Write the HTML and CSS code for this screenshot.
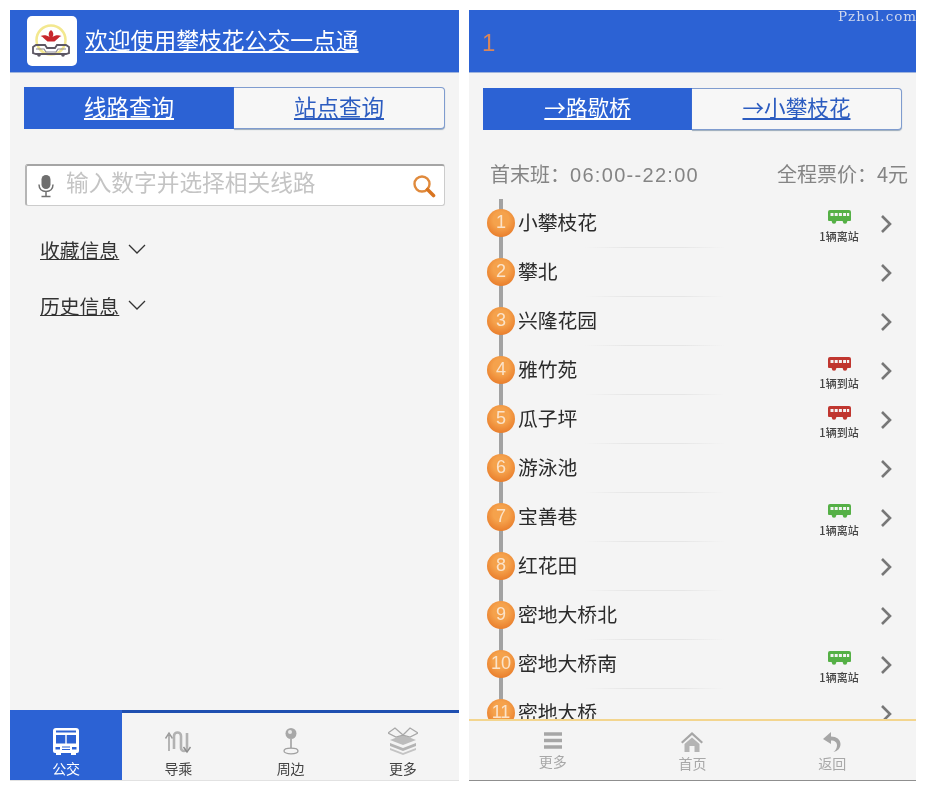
FILE: index.html
```html
<!DOCTYPE html>
<html lang="zh-CN">
<head>
    <meta charset="UTF-8">
    <meta name="viewport" content="width=device-width, initial-scale=1.0">
    <title>攀枝花公交一点通</title>
    <link rel="stylesheet" href="styles.css">
</head>
<body>
    <svg class="icon-defs" width="0" height="0">
        <symbol id="bus-side" viewBox="0 0 23 14">
            <path d="M2 0h19a2 2 0 0 1 2 2v8a1 1 0 0 1-1 1H1a1 1 0 0 1-1-1V2a2 2 0 0 1 2-2z" fill="currentColor"/>
            <path d="M2.500 3h3v3h-3zM6.700 3h3v3h-3zM10.900 3h3v3h-3zM15.100 3h3v3h-3zM19 3h2.200v3H19z" fill="#f4f4f4"/>
            <circle cx="6" cy="11.500" r="2.200" fill="currentColor"/>
            <circle cx="17" cy="11.500" r="2.200" fill="currentColor"/>
        </symbol>
        <symbol id="chevron" viewBox="0 0 12 20">
            <path d="M2 2l8 8-8 8" fill="none" stroke="currentColor" stroke-width="2.600"/>
        </symbol>
    </svg>

    <section class="screen">
        <header class="top-bar">
            <div class="logo">
                <svg width="44" height="38" viewBox="0 0 44 38">
                    <circle cx="21" cy="18" r="14.500" fill="#fff" stroke="#f3e88f" stroke-width="2.500"/>
                    <path d="M21 8c2.500 2 3 4.500 1.500 7 2.500-2 6-2.500 9-1-2.500.5-4 3.500-7 5.500h-7c-3-2-4.500-5-7-5.500 3-1.500 6.500-1 9 1-1.500-2.500-1-5 1.500-7z" fill="#c8262c"/>
                    <path d="M3 31v-6l3-2h9l2 3h8l2-3h9l3 2v6l-3 1H6z" fill="none" stroke="#5d5864" stroke-width="1.800"/>
                    <path d="M6 27h8l2 3h10l2-3h8" fill="none" stroke="#8a8590" stroke-width="1.200"/>
                    <circle cx="9" cy="33" r="1.800" fill="#5d5864"/>
                    <circle cx="33" cy="33" r="1.800" fill="#5d5864"/>
                </svg>
            </div>
            <a class="app-title" href="#">欢迎使用攀枝花公交一点通</a>
        </header>

        <div class="tabs tabs-main">
            <a class="tab active" href="#">线路查询</a>
            <a class="tab" href="#">站点查询</a>
        </div>

        <div class="search-box">
            <svg class="mic" width="16" height="24" viewBox="0 0 16 24">
                <rect x="3.500" y="1" width="9" height="14" rx="4.500" fill="#6f6f6f"/>
                <path d="M1 10.500c0 4.500 3 7 7 7s7-2.500 7-7M8 17.500V22M3.500 22.500h9" fill="none" stroke="#6f6f6f" stroke-width="1.500"/>
            </svg>
            <span class="placeholder">输入数字并选择相关线路</span>
            <svg class="magnifier" width="24" height="24" viewBox="0 0 24 24">
                <circle cx="10" cy="10" r="7.500" fill="none" stroke="#e08a3c" stroke-width="2.400"/>
                <path d="M15.500 15.500l6 6" stroke="#d9741f" stroke-width="3.600" stroke-linecap="round"/>
            </svg>
        </div>

        <div class="fold-list">
            <a class="fold" href="#"><span>收藏信息</span><svg width="18" height="12" viewBox="0 0 18 12"><path d="M1 2l8 8 8-8" fill="none" stroke="#333" stroke-width="1.300"/></svg></a>
            <a class="fold" href="#"><span>历史信息</span><svg width="18" height="12" viewBox="0 0 18 12"><path d="M1 2l8 8 8-8" fill="none" stroke="#333" stroke-width="1.300"/></svg></a>
        </div>

        <nav class="main-nav">
            <a class="nav-item active" href="#">
                <svg width="28" height="28" viewBox="0 0 28 28">
                    <path d="M4 1h20a3 3 0 0 1 3 3v20a2 2 0 0 1-2 2H3a2 2 0 0 1-2-2V4a3 3 0 0 1 3-3z" fill="#fff"/>
                    <path d="M4 3.500h20v2H4zM4 8h9.300v8.500H4zM14.700 8H24v8.500h-9.300z" fill="#2c62d4"/>
                    <path d="M3.500 20h4.500v2.500H3.500zM20 20h4.500v2.500H20zM10 19.500h8v1h-8zM10 22h8v1h-8z" fill="#2c62d4"/>
                    <path d="M4 25h5v3H4zM19 25h5v3h-5z" fill="#fff"/>
                </svg>
                <span>公交</span>
            </a>
            <a class="nav-item" href="#">
                <svg width="28" height="28" viewBox="0 0 28 28">
                    <path d="M5 24V8M1.500 11.500L5 6l3.500 5.500" fill="none" stroke="#9a9a9a" stroke-width="1.400"/>
                    <path d="M10 22V9a3.500 3.500 0 0 1 7 0v12a3 3 0 0 0 6 0V6" fill="none" stroke="#b2b2b2" stroke-width="2.600"/>
                    <path d="M19.500 20l3.500 5 3.500-5" fill="none" stroke="#8c8c8c" stroke-width="1.400"/>
                </svg>
                <span>导乘</span>
            </a>
            <a class="nav-item" href="#">
                <svg width="20" height="28" viewBox="0 0 20 28">
                    <circle cx="10" cy="6.500" r="5.500" fill="#a8a8a8"/>
                    <circle cx="9" cy="5" r="2" fill="#e8e8e8"/>
                    <path d="M10 12v11" stroke="#a0a0a0" stroke-width="1.600"/>
                    <ellipse cx="10" cy="24" rx="7" ry="2.800" fill="#f4f4f4" stroke="#a0a0a0" stroke-width="1.300"/>
                </svg>
                <span>周边</span>
            </a>
            <a class="nav-item" href="#">
                <svg width="30" height="28" viewBox="0 0 30 28">
                    <path d="M15 8L2 13l13 5 13-5z" fill="#bcbcbc"/>
                    <path d="M2 16l13 5 13-5v3l-13 5-13-5z" fill="#b4b4b4"/>
                    <path d="M2 21l13 5 13-5v2l-13 5-13-5z" fill="#c4c4c4"/>
                    <path d="M15 8L7 1 0 6l8 4zM15 8l7-7 8 5-8 4z" fill="#f4f4f4" stroke="#a8a8a8" stroke-width="1.300"/>
                </svg>
                <span>更多</span>
            </a>
        </nav>
    </section>

    <section class="screen">
        <header class="top-bar">
            <span class="line-no">1</span>
        </header>
        <span class="watermark">Pzhol.com</span>

        <div class="tabs tabs-line">
            <a class="tab active" href="#">→路歇桥</a>
            <a class="tab" href="#">→小攀枝花</a>
        </div>

        <div class="line-info">
            <span>首末班：<span class="time">06:00--22:00</span></span>
            <span>全程票价：4元</span>
        </div>

        <ul class="stops">
            <li class="stop"><b class="num">1</b><span class="name">小攀枝花</span><span class="bus leaving"><svg width="23" height="14"><use href="#bus-side"/></svg><small>1辆离站</small></span><svg class="more" width="12" height="20"><use href="#chevron"/></svg></li>
            <li class="stop"><b class="num">2</b><span class="name">攀北</span><span class="bus"></span><svg class="more" width="12" height="20"><use href="#chevron"/></svg></li>
            <li class="stop"><b class="num">3</b><span class="name">兴隆花园</span><span class="bus"></span><svg class="more" width="12" height="20"><use href="#chevron"/></svg></li>
            <li class="stop"><b class="num">4</b><span class="name">雅竹苑</span><span class="bus arrived"><svg width="23" height="14"><use href="#bus-side"/></svg><small>1辆到站</small></span><svg class="more" width="12" height="20"><use href="#chevron"/></svg></li>
            <li class="stop"><b class="num">5</b><span class="name">瓜子坪</span><span class="bus arrived"><svg width="23" height="14"><use href="#bus-side"/></svg><small>1辆到站</small></span><svg class="more" width="12" height="20"><use href="#chevron"/></svg></li>
            <li class="stop"><b class="num">6</b><span class="name">游泳池</span><span class="bus"></span><svg class="more" width="12" height="20"><use href="#chevron"/></svg></li>
            <li class="stop"><b class="num">7</b><span class="name">宝善巷</span><span class="bus leaving"><svg width="23" height="14"><use href="#bus-side"/></svg><small>1辆离站</small></span><svg class="more" width="12" height="20"><use href="#chevron"/></svg></li>
            <li class="stop"><b class="num">8</b><span class="name">红花田</span><span class="bus"></span><svg class="more" width="12" height="20"><use href="#chevron"/></svg></li>
            <li class="stop"><b class="num">9</b><span class="name">密地大桥北</span><span class="bus"></span><svg class="more" width="12" height="20"><use href="#chevron"/></svg></li>
            <li class="stop"><b class="num">10</b><span class="name">密地大桥南</span><span class="bus leaving"><svg width="23" height="14"><use href="#bus-side"/></svg><small>1辆离站</small></span><svg class="more" width="12" height="20"><use href="#chevron"/></svg></li>
            <li class="stop"><b class="num">11</b><span class="name">密地大桥</span><span class="bus"></span><svg class="more" width="12" height="20"><use href="#chevron"/></svg></li>
        </ul>

        <footer class="line-nav">
            <a class="line-nav-item" href="#">
                <svg width="22" height="20" viewBox="0 0 22 20"><path d="M2 3h18M2 9.500h18M2 16h18" stroke="#a6a6a6" stroke-width="3.400"/></svg>
                <span>更多</span>
            </a>
            <a class="line-nav-item" href="#">
                <svg width="24" height="22" viewBox="0 0 24 22"><path d="M12 1L1 11l1.500 1.500L12 4l9.500 8.500L23 11z" fill="#a6a6a6"/><path d="M4.500 13L12 6.500l7.500 6.500v8h-5v-6h-5v6h-5z" fill="#b4b4b4"/></svg>
                <span>首页</span>
            </a>
            <a class="line-nav-item" href="#">
                <svg width="20" height="22" viewBox="0 0 20 22"><path d="M9 1L1 8l8 5V9.500c4 0 6 2 6 5 0 2.500-1.500 5-3.500 6.500 4.500-1 7-4 7-8 0-4.500-4-7.500-9.500-7.500z" fill="#a6a6a6"/></svg>
                <span>返回</span>
            </a>
        </footer>
    </section>
</body>
</html>
```

FILE: styles.css
```css
* {
    box-sizing: border-box;
}
html, body {
    margin: 0;
    padding: 0;
}
body {
    display: flex;
    gap: 10px;
    width: 926px;
    height: 791px;
    padding: 10px;
    overflow: hidden;
    background-color: #fff;
    font-family: "Noto Sans CJK SC", "Liberation Sans", sans-serif;
    color: #333;
}
a {
    color: inherit;
}
.icon-defs {
    position: absolute;
}
.screen {
    position: relative;
    display: flex;
    flex-direction: column;
    height: 771px;
    background-color: #f4f4f4;
    overflow: hidden;
    filter: blur(0.4px);
}
.screen:first-of-type {
    width: 449px;
}
.screen:last-of-type {
    width: 447px;
    flex: none;
    border-bottom: 1px solid #8f8f8f;
}
.top-bar {
    display: flex;
    align-items: center;
    flex: none;
    height: 63px;
    padding-left: 17px;
    background-color: #2c62d4;
    color: #fff;
    border-bottom: 1px solid #9fb4dd;
}
.logo {
    display: flex;
    align-items: center;
    justify-content: center;
    flex: none;
    width: 50px;
    height: 50px;
    background-color: #fff;
    border-radius: 5px;
}
.app-title {
    margin-left: 8px;
    padding-bottom: 2px;
    font-size: 22.800px;
    line-height: 30px;
}
.line-no {
    margin-left: -4px;
    margin-top: 4px;
    font-family: "Liberation Sans", sans-serif;
    font-size: 24px;
    color: #d9865a;
}
.watermark {
    position: absolute;
    top: -2px;
    left: 369px;
    font-family: "DejaVu Serif", serif;
    font-size: 13.500px;
    letter-spacing: 1px;
    white-space: nowrap;
    color: #cfd8ee;
}
.tabs {
    display: flex;
    flex: none;
    height: 42px;
    font-size: 22.500px;
}
.tabs-main {
    margin: 14px 14px 0;
}
.tabs-line {
    margin: 15px 14px 0;
    font-size: 21.600px;
}
.tab {
    flex: 1;
    display: flex;
    align-items: center;
    justify-content: center;
    padding-bottom: 5px;
    color: #2c5cc0;
    background-color: #f7f7f7;
    border: 1px solid #7f9ccf;
    border-left: none;
    border-radius: 0 4px 4px 0;
    box-shadow: 0 1px 1px #9ab;
}
.tab.active {
    color: #fff;
    background-color: #2c62d4;
    border: none;
    border-radius: 0;
    box-shadow: none;
}
.search-box {
    display: flex;
    align-items: center;
    flex: none;
    height: 42px;
    margin: 35px 14px 0 15px;
    padding: 0 8px 0 11px;
    background-color: #fff;
    border: 1px solid #ccc;
    border-top: 2px solid #a5a5a5;
    border-left: 2px solid #b5b5b5;
    border-radius: 3px;
}
.placeholder {
    flex: 1;
    margin-left: 12px;
    padding-bottom: 9px;
    font-size: 22.700px;
    color: #c4c4c4;
}
.fold-list {
    flex: 1;
    padding: 29px 0 0 30px;
}
.fold {
    display: flex;
    align-items: center;
    gap: 9px;
    height: 28px;
    margin-bottom: 28px;
    font-size: 19.800px;
    color: #333;
}
.fold span {
    text-decoration: underline;
}
.main-nav {
    display: grid;
    grid-template-columns: repeat(4, 1fr);
    flex: none;
    height: 71px;
    border-top: 3px solid #1f4fb0;
    border-bottom: 1px solid #e2e2e2;
}
.nav-item {
    display: flex;
    flex-direction: column;
    align-items: center;
    padding-top: 14px;
    font-size: 14px;
    line-height: 20px;
    text-decoration: none;
    color: #444;
}
.nav-item svg {
    height: 28px;
    margin-bottom: 3px;
}
.nav-item.active {
    margin-top: -3px;
    padding-top: 17px;
    background-color: #2c62d4;
    color: #fff;
}
.line-info {
    display: flex;
    justify-content: space-between;
    flex: none;
    padding: 30px 8px 0 21px;
    font-size: 20px;
    line-height: 28px;
    color: #848484;
}
.time {
    font-family: "Liberation Sans", sans-serif;
    letter-spacing: 1.300px;
}
.stops {
    flex: 1;
    min-height: 0;
    margin: 10px 0 0;
    padding: 0;
    list-style: none;
    overflow: hidden;
    background: linear-gradient(#a2a2a2, #a2a2a2) no-repeat 30px 0 / 4px 100%;
}
.stop {
    display: flex;
    align-items: center;
    height: 49px;
    padding: 0 24px 0 18px;
    background: linear-gradient(90deg, transparent, #e6e6e6 30%, #e6e6e6 70%, transparent) no-repeat 116px 100% / 140px 1px;
}
.num {
    display: flex;
    align-items: center;
    justify-content: center;
    flex: none;
    width: 28px;
    height: 28px;
    margin-bottom: 2px;
    border-radius: 50%;
    background: radial-gradient(circle at 50% 38%, #f5a24c 35%, #e36c1c);
    font-family: "Liberation Sans", sans-serif;
    font-size: 18px;
    font-weight: normal;
    color: #fbe3c9;
}
.name {
    flex: 1;
    margin-left: 3px;
    padding-bottom: 5px;
    font-size: 19.800px;
    color: #2b2b2b;
}
.bus {
    display: flex;
    flex-direction: column;
    align-items: center;
    width: 44px;
    margin: 6px 19px 0 0;
}
.bus small {
    font-size: 11px;
    font-weight: 500;
    white-space: nowrap;
    line-height: 14px;
    color: #444;
    margin-top: 5px;
}
.leaving svg {
    color: #55b046;
}
.arrived svg {
    color: #c0362f;
}
.more {
    flex: none;
    color: #777;
}
.line-nav {
    display: grid;
    grid-template-columns: repeat(3, 1fr);
    flex: none;
    height: 61px;
    padding: 0 14px;
    border-top: 2px solid #f3d58e;
}
.line-nav-item {
    display: flex;
    flex-direction: column;
    align-items: center;
    padding-top: 10px;
    font-size: 14px;
    line-height: 20px;
    text-decoration: none;
    color: #a8a8a8;
}
```
